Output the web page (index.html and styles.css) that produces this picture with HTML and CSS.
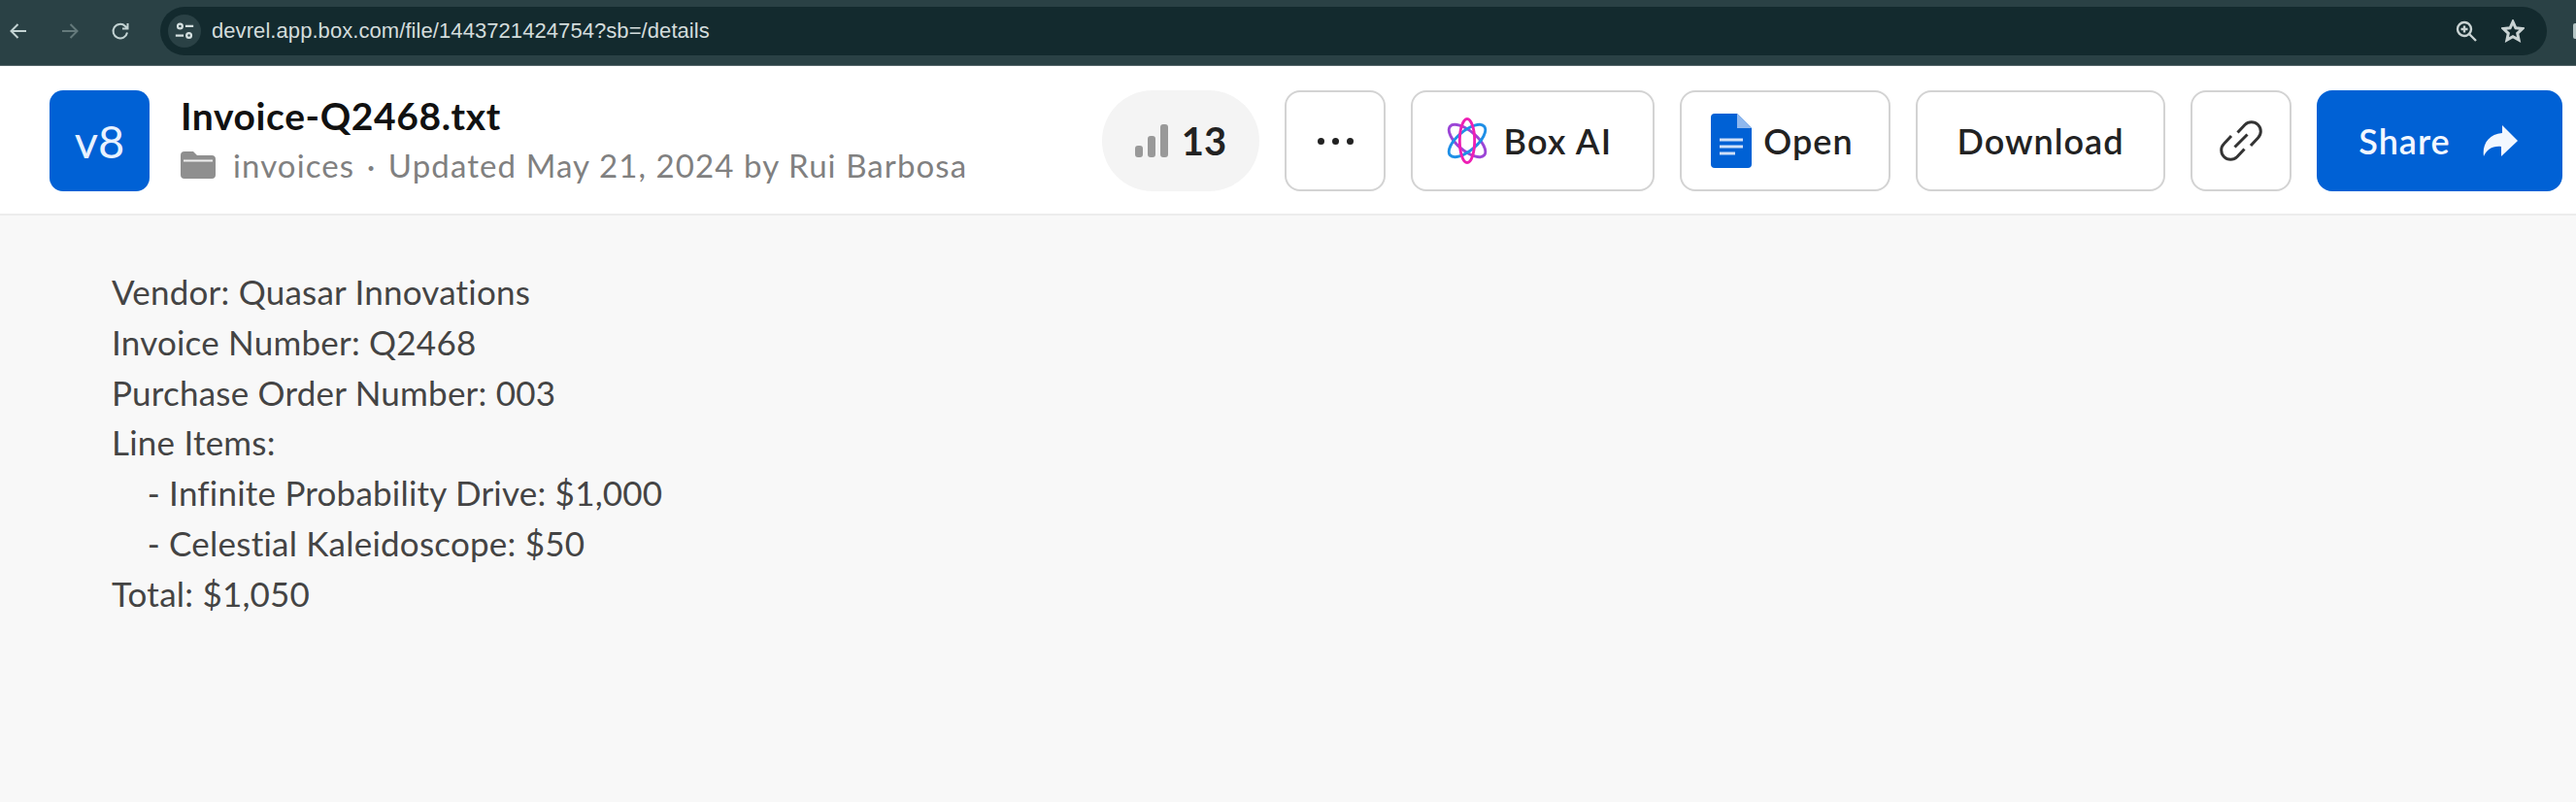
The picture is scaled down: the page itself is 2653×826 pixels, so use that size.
FILE: index.html
```html
<!DOCTYPE html>
<html lang="en">
<head>
<meta charset="utf-8">
<title>Invoice-Q2468.txt</title>
<link rel="stylesheet" href="styles.css">
</head>
<body>
<div class="chrome">
  <div class="nav">
    <svg class="nav-icon" viewBox="0 0 24 24"><path d="M20 12H5M11.500 5 4.500 12l7 7"/></svg>
    <svg class="nav-icon dim" viewBox="0 0 24 24"><path d="M4 12h15M12.500 5l7 7-7 7"/></svg>
    <svg class="nav-icon" viewBox="0 0 24 24"><path d="M19 13.500A7.300 7.300 0 1 1 17 7l2.500 2.500M19.500 4v5.500H14"/></svg>
  </div>
  <div class="omnibox">
    <span class="tune">
      <svg viewBox="0 0 24 24"><circle cx="7" cy="6.500" r="2.600"/><path d="M13 6.500h9M2 17h9"/><circle cx="17" cy="17" r="2.600"/></svg>
    </span>
    <span class="url">devrel.app.box.com/file/1443721424754?sb=/details</span>
    <span class="omni-tools">
      <svg class="omni-icon" viewBox="0 0 24 24"><circle cx="10" cy="10" r="7"/><path d="M15 15l7 7M10 6.500v7M6.500 10h7"/></svg>
      <svg class="omni-icon star" viewBox="0 0 24 24"><path d="M12 2.500l2.900 6.300 6.900.8-5.100 4.700 1.400 6.800-6.100-3.400-6.100 3.400 1.400-6.800L2.200 9.600l6.900-.8z"/></svg>
    </span>
  </div>
  <span class="profile-edge"></span>
</div>
<header class="header">
  <div class="tile">v8</div>
  <div class="file-info">
    <div class="file-name">Invoice-Q2468.txt</div>
    <div class="file-meta">
      <svg class="folder" viewBox="0 0 36 28"><path d="M0 4a4 4 0 0 1 4-4h9l4 4h15a4 4 0 0 1 4 4v16a4 4 0 0 1-4 4H4a4 4 0 0 1-4-4z"/><path class="folder-line" d="M3 9.500h30"/></svg>
      <span>invoices</span><span class="dot">·</span><span>Updated May 21, 2024 by Rui Barbosa</span>
    </div>
  </div>
  <div class="actions">
    <div class="pill">
      <svg class="bars" viewBox="0 0 34 34"><rect x="0" y="22" width="8" height="12" rx="3"/><rect x="13" y="12" width="8" height="22" rx="3"/><rect x="26" y="0" width="8" height="34" rx="3"/></svg>
      <span>13</span>
    </div>
    <button class="btn square more"><i></i><i></i><i></i></button>
    <button class="btn boxai">
      <svg class="atom" viewBox="0 0 48 50">
        <ellipse cx="24" cy="25" rx="10.500" ry="24" transform="rotate(-50 24 25)" stroke="#9b45d6"/>
        <ellipse cx="24" cy="25" rx="10.500" ry="24" transform="rotate(50 24 25)" stroke="#1f8fe6"/>
        <ellipse cx="24" cy="25" rx="8" ry="23.500" stroke="#ee1fb4"/>
      </svg>
      <span>Box AI</span>
    </button>
    <button class="btn open">
      <svg class="doc" viewBox="0 0 42 56"><path d="M4 0h23l15 15v37a4 4 0 0 1-4 4H4a4 4 0 0 1-4-4V4a4 4 0 0 1 4-4z" fill="#0061d5"/><path d="M27 0l15 15H27z" fill="#8fb8ee"/><path class="doc-lines" d="M9 27h24M9 34h24M9 41h16"/></svg>
      <span>Open</span>
    </button>
    <button class="btn download">Download</button>
    <button class="btn square">
      <svg class="link" viewBox="0 0 48 48"><path d="M20.500 15.500l7.500-8a9.500 9.500 0 0 1 13.500 13.500l-7.500 8"/><path d="M27.500 32.500l-7.500 8A9.500 9.500 0 0 1 6.500 27l7.500-8"/><path d="M17.500 30.500l13-13"/></svg>
    </button>
    <button class="btn share">
      <span>Share</span>
      <svg class="arrow" viewBox="0 0 36 32"><path d="M20 0l16 16-17 16V22C10 21 4 25 1 32-1 20 6 9 20 8z"/></svg>
    </button>
  </div>
</header>
<main class="preview">
<pre class="doc-text">Vendor: Quasar Innovations
Invoice Number: Q2468
Purchase Order Number: 003
Line Items:
    - Infinite Probability Drive: $1,000
    - Celestial Kaleidoscope: $50
Total: $1,050</pre>
</main>
</body>
</html>
```
FILE: styles.css
```css
* { box-sizing: border-box; }
html, body { margin: 0; height: 100%; overflow: hidden; }
body { background: #f8f8f8; font-family: Lato, "Open Sans", sans-serif; font-variant-ligatures: none; display: flex; flex-direction: column; }

.chrome {
  height: 68px; flex: none; display: flex; align-items: center;
  padding: 0 0 3px 7px; gap: 29px;
  background: #2a4145; border-bottom: 1px solid #56666a;
}
.nav { display: flex; align-items: center; gap: 28.500px; }
.nav-icon { width: 24px; height: 24px; fill: none; stroke: #c3d3d3; stroke-width: 2; }
.nav-icon.dim { stroke: #64797b; }
.omnibox {
  width: 2458px; height: 50px; border-radius: 25px; background: #132a2e;
  display: flex; align-items: center; flex: none; padding: 0 23px 0 8px;
}
.tune {
  width: 34px; height: 34px; border-radius: 50%; background: #2a4145;
  display: flex; align-items: center; justify-content: center;
}
.tune svg { width: 22px; height: 22px; fill: none; stroke: #d5e0e0; stroke-width: 2.500; }
.url { margin-left: 11px; font: 22px "Liberation Sans", Arial, sans-serif; letter-spacing: .07px; color: #d3dcdc; }
.omni-tools { margin-left: auto; display: flex; gap: 24px; }
.omni-icon { width: 24px; height: 24px; fill: none; stroke: #c9d3d3; stroke-width: 2.400; }
.omni-icon.star { stroke-width: 3; }
.profile-edge { flex: none; width: 3px; height: 16px; margin-left: -2px; border-radius: 2px 0 0 2px; background: #b4c4c4; }

.header {
  height: 154px; flex: none; background: #fff; border-bottom: 2px solid #ececec;
  display: flex; align-items: center; padding: 2px 14px 0 51px;
}
.tile {
  width: 103px; height: 104px; border-radius: 14px; background: #0061d5; color: #e8f2ff;
  font-size: 47px; display: flex; align-items: center; justify-content: center;
}
.file-info { margin-left: 32px; }
.file-name { font-size: 39px; font-weight: 700; color: #111; line-height: 44px; letter-spacing: .6px; margin-top: -4px; }
.file-meta { display: flex; align-items: center; font-size: 33px; line-height: 40px; color: #808080; margin-top: 9px; letter-spacing: 1.100px; }
.folder { width: 36px; height: 28px; margin-right: 18px; fill: #8f8f8f; }
.folder-line { stroke: #eee; stroke-width: 2; fill: none; }
.dot { margin: 0 12.500px; }

.actions { margin-left: auto; display: flex; align-items: center; gap: 26px; }
.pill {
  width: 162px; height: 104px; border-radius: 52px; background: #f4f4f4;
  display: flex; align-items: center; justify-content: center; gap: 14px;
  font-size: 40px; font-weight: 700; color: #222;
}
.bars { width: 34px; height: 34px; fill: #999; }
.btn {
  height: 104px; border: 2px solid #d3d3d3; border-radius: 16px; background: #fff;
  display: flex; align-items: center; justify-content: center;
  font-family: inherit; font-size: 36px; font-weight: 600; letter-spacing: 1px; color: #222; padding: 0;
}
.square { width: 104px; }
.more { gap: 8px; }
.more i { width: 7px; height: 7px; border-radius: 50%; background: #222; }
.boxai { width: 251px; gap: 14px; padding-right: 8px; letter-spacing: 1.300px; }
.atom { width: 46px; height: 50px; fill: none; stroke-width: 3; }
.open { width: 217px; gap: 12px; padding-right: 6px; }
.doc { width: 42px; height: 56px; }
.doc-lines { stroke: #cfe0f8; stroke-width: 3; fill: none; }
.download { width: 257px; }
.link { width: 48px; height: 48px; fill: none; stroke: #333; stroke-width: 3; }
.share {
  width: 253px; background: #0061d5; border-color: #0061d5; color: #f2f7ff; gap: 33px; padding-right: 3px;
}
.arrow { width: 36px; height: 32px; fill: #f2f7ff; }

.preview { flex: 1; padding: 0 0 0 115px; }
.doc-text {
  margin: 0; padding-top: 53px; font-family: Lato, sans-serif; font-variant-ligatures: none; font-size: 35px; letter-spacing: .22px; line-height: 51.800px; color: #444;
}
```
